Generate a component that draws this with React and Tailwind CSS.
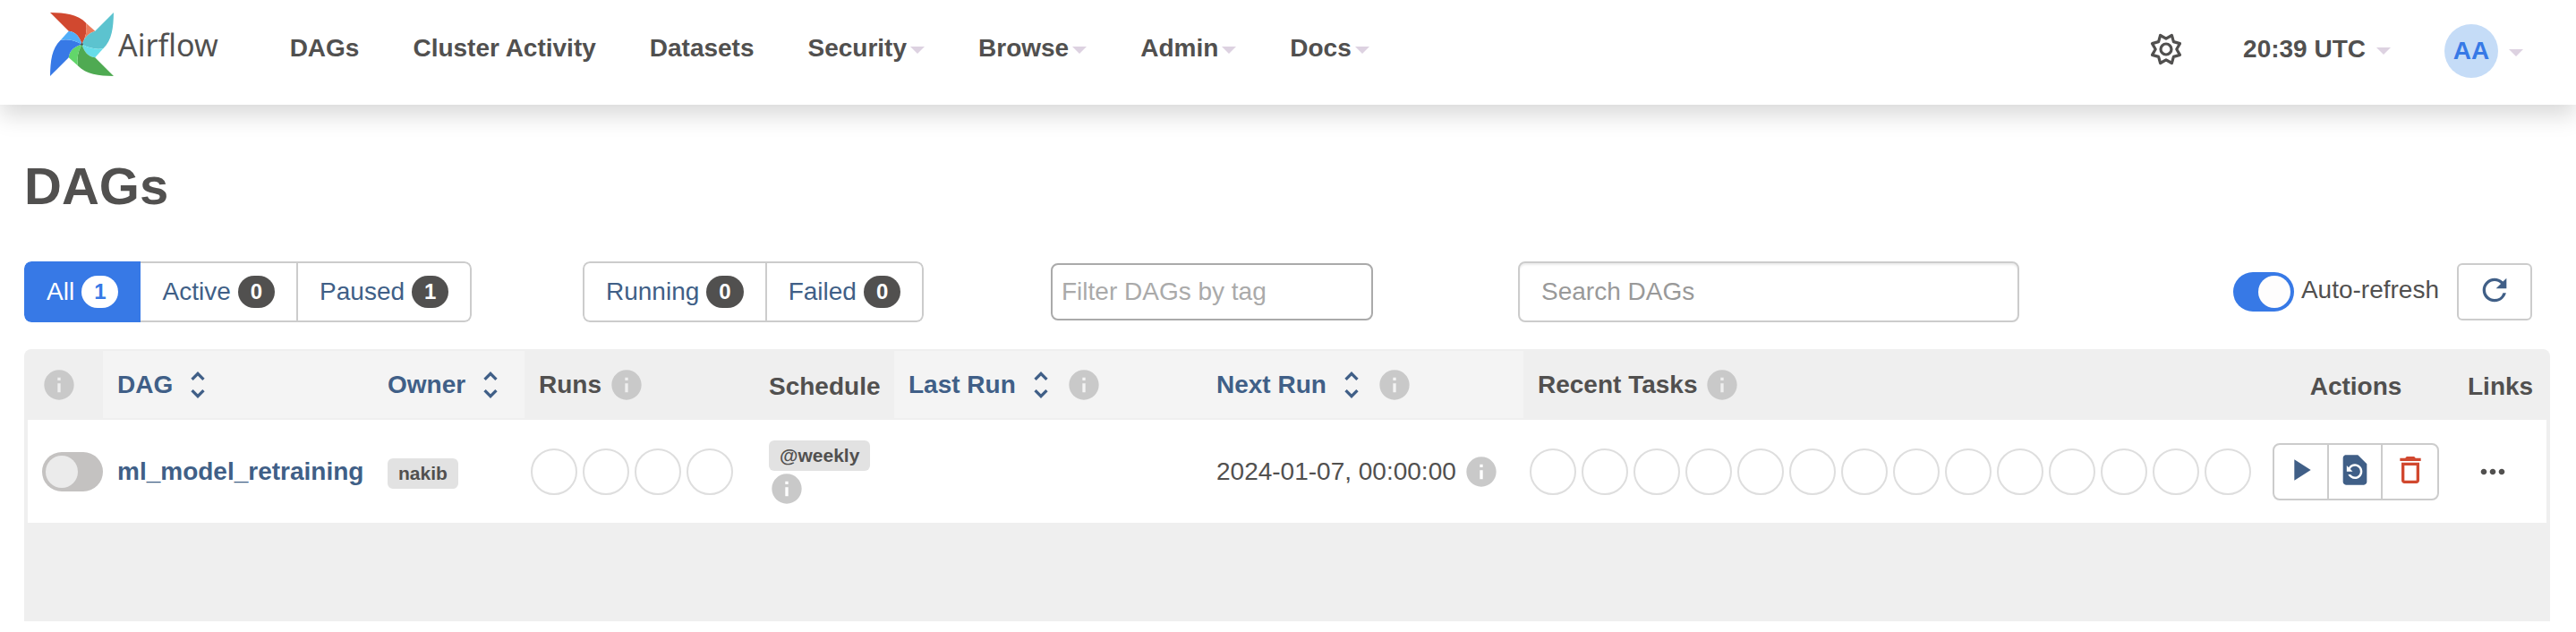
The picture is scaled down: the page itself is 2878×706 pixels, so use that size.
import React from "react";
import {
  MdInfo,
  MdUnfoldMore,
  MdPlayArrow,
  MdRestorePage,
  MdDeleteOutline,
  MdMoreHoriz,
  MdRefresh,
} from "react-icons/md";

const navItems = [
  { label: "DAGs" },
  { label: "Cluster Activity" },
  { label: "Datasets" },
  { label: "Security", menu: true },
  { label: "Browse", menu: true },
  { label: "Admin", menu: true },
  { label: "Docs", menu: true },
];

const innerEdge = "C-6 -22 -20 -42 -44 -44";
const foldEdge = "C42 -20 22 -6 0 0";

const blades = [
  { angle: 0, dark: "#d1482f", light: "#ec7c5c", inner: innerEdge, fold: "C24 -38 8 -22 0 0" },
  { angle: 90, dark: "#5cc3cf", light: "#66dde9", inner: "C-22 -8 -38 -24 -44 -44", fold: foldEdge },
  { angle: 180, dark: "#4faa52", light: "#62d66a", inner: innerEdge, fold: foldEdge },
  { angle: 270, dark: "#3779e6", light: "#51aef8", inner: innerEdge, fold: foldEdge },
];

function Pinwheel() {
  return (
    <svg viewBox="-106 -106 212 212" className="size-[71px]" aria-hidden="true">
      {blades.map((b) => (
        <g key={b.angle} transform={`rotate(${b.angle})`}>
          <path d={`M-106 -106C-56 -105 -14 -101 14 -71Q20 -36 0 0${b.inner}Z`} fill={b.dark} />
          <path d={`M14 -71L44 -44${b.fold}Q20 -36 14 -71Z`} fill={b.light} />
        </g>
      ))}
      <circle r="4" fill="#51504f" />
    </svg>
  );
}

function Gear() {
  return (
    <svg viewBox="-18 -18 36 36" className="size-9" fill="none" stroke="#51504f" strokeWidth="3.2" strokeLinejoin="round" aria-hidden="true">
      <path d="M-6.4 -15.5L0 -11.8L6.4 -15.5L8.4 -8.4L15.5 -6.4L11.8 0L15.5 6.4L8.4 8.4L6.4 15.5L0 11.8L-6.4 15.5L-8.4 8.4L-15.5 6.4L-11.8 0L-15.5 -6.4L-8.4 -8.4Z" />
      <circle r="6" />
    </svg>
  );
}

function Caret() {
  return (
    <svg viewBox="0 0 16 8" className="mt-1 h-2 w-4 shrink-0" aria-hidden="true">
      <path d="M0 0H16L8 8Z" fill="#ddd2e1" />
    </svg>
  );
}

function Info() {
  return <MdInfo className="size-10 shrink-0 text-[#c9c9c9]" role="img" aria-label="Info" />;
}

function FilterGroup({ items }) {
  return (
    <div className="inline-flex overflow-hidden rounded-lg">
      {items.map((it, i) => (
        <a
          key={it.label}
          href="#"
          className={
            "flex h-[68px] items-center gap-2 border-2 " +
            (it.active
              ? "rounded-l-lg border-[#3779e6] bg-[#3779e6] px-[23px] text-white"
              : "border-[#ccc] px-6 text-[#405f87]") +
            (i > 0 ? " border-l-0" : " rounded-l-lg") +
            (i === items.length - 1 ? " rounded-r-lg" : "")
          }
        >
          {it.label}
          <span
            className={
              "rounded-[20px] px-[14px] text-2xl leading-9 font-bold " +
              (it.active ? "bg-white text-[#3779e6]" : "bg-[#51504f] text-white")
            }
          >
            {it.count}
          </span>
        </a>
      ))}
    </div>
  );
}

function Toggle({ label, on, hidden }) {
  return (
    <label className="flex items-center gap-2">
      <input type="checkbox" role="switch" defaultChecked={on} aria-label={label} className="peer sr-only" />
      <span className="flex h-11 w-[68px] shrink-0 rounded-full bg-[#c4c2c1] p-1 peer-checked:justify-end peer-checked:bg-[#3779e6]">
        <span className={"size-9 rounded-full " + (on ? "bg-[#fefdfd]" : "bg-[#ebebeb]")} />
      </span>
      {!hidden && <span className="pb-1">{label}</span>}
    </label>
  );
}

function SortHead({ label, info, className }) {
  return (
    <th scope="col" className={"bg-[#f4f4f4] px-4 text-left " + className}>
      <div className="flex items-center gap-2">
        <a href="#" className="flex items-center gap-2 text-[#405f87]">
          {label}
          <MdUnfoldMore className="size-10" aria-hidden="true" />
        </a>
        {info && <Info />}
      </div>
    </th>
  );
}

function Circles({ count }) {
  return (
    <div className="flex gap-[6px]">
      {Array.from({ length: count }, (_, i) => (
        <svg key={i} viewBox="0 0 52 52" className="size-[52px] shrink-0" aria-hidden="true">
          <circle cx="26" cy="26" r="25" fill="none" stroke="#dedede" strokeWidth="2" />
        </svg>
      ))}
    </div>
  );
}

const tag = "inline-block rounded-md bg-[#e2e2e2] px-3 text-[21px] leading-[34px] font-bold";

export default function App() {
  return (
    <div className="bg-white font-['Liberation_Sans',Arial,sans-serif] text-[28px] leading-10 text-[#51504f]">
      <header className="relative flex h-[117px] items-start justify-between bg-white pr-[59px] pl-14 shadow-[0_12px_24px_rgba(0,0,0,0.15)]">
        <div className="flex items-start">
          <a href="#" className="flex items-center gap-[5px] pt-[14px] font-['Noto_Sans',sans-serif] text-[34px]">
            <Pinwheel />
            <span>Airflow</span>
          </a>
          <nav className="ml-20 flex gap-[60px] pt-[34px] font-bold">
            {navItems.map((n) => (
              <a key={n.label} href="#" className="flex items-center gap-1">
                {n.label}
                {n.menu && <Caret />}
              </a>
            ))}
          </nav>
        </div>
        <div className="flex items-center pt-[27px] font-bold">
          <button type="button" aria-label="Settings" className="mr-[68px] -mt-1">
            <Gear />
          </button>
          <button type="button" className="-mt-1 mr-[60px] flex items-center gap-3">
            20:39 UTC
            <Caret />
          </button>
          <button type="button" className="flex items-center gap-3">
            <span className="size-[60px] rounded-full bg-[#c5dcf7] text-center leading-[60px] text-[#3779e6]">AA</span>
            <Caret />
          </button>
        </div>
      </header>

      <main className="pt-14 pr-[29px] pb-3 pl-[27px]">
        <h1 className="text-[58px] leading-[70px] font-bold">DAGs</h1>

        <div className="mt-[49px] grid grid-cols-[624fr_523fr_522fr_1153fr] items-center">
          <div className="flex">
            <FilterGroup
              items={[
                { label: "All", count: 1, active: true },
                { label: "Active", count: 0 },
                { label: "Paused", count: 1 },
              ]}
            />
          </div>
          <div className="flex">
            <FilterGroup
              items={[
                { label: "Running", count: 0 },
                { label: "Failed", count: 0 },
              ]}
            />
          </div>
          <input
            type="text"
            aria-label="Filter DAGs by tag"
            placeholder="Filter DAGs by tag"
            className="h-16 w-[360px] rounded-lg border-2 border-[#aaa] px-[10px] placeholder:text-[#aaa]"
          />
          <div className="flex items-center justify-between pr-5">
            <input
              type="search"
              aria-label="Search DAGs"
              placeholder="Search DAGs"
              className="h-[68px] w-[560px] rounded-lg border-2 border-[#ccc] px-6 shadow-[inset_0_2px_2px_rgba(0,0,0,0.075)] placeholder:text-[#999]"
            />
            <div className="flex items-center gap-5">
              <Toggle label="Auto-refresh" on />
              <button
                type="button"
                aria-label="Refresh"
                className="flex h-16 w-[84px] items-center justify-center rounded-md border-2 border-[#ccc] pb-1 text-[#405f87]"
              >
                <MdRefresh className="size-10" />
              </button>
            </div>
          </div>
        </div>

        <div className="mt-[30px] rounded-t-lg bg-[#efefef] px-1 pt-[2px] pb-[110px]">
          <table className="w-full table-fixed border-collapse">
            <thead>
              <tr className="h-[76px]">
                <th scope="col" className="w-[84px] pl-[15px]">
                  <Info />
                </th>
                <SortHead label="DAG" className="w-[302px]" />
                <SortHead label="Owner" className="w-[169px]" />
                <th scope="col" className="w-[257px] px-4">
                  <div className="flex items-center gap-2">
                    Runs
                    <Info />
                  </div>
                </th>
                <th scope="col" className="w-[156px] px-4 pt-1 text-left">
                  Schedule
                </th>
                <SortHead label="Last Run" info className="w-[344px]" />
                <SortHead label="Next Run" info className="w-[359px]" />
                <th scope="col" className="px-4">
                  <div className="flex items-center gap-2">
                    Recent Tasks
                    <Info />
                  </div>
                </th>
                <th scope="col" className="w-[218px] px-4 pt-1 text-center">
                  Actions
                </th>
                <th scope="col" className="w-[104px] px-4 pt-1 text-center">
                  Links
                </th>
              </tr>
            </thead>
            <tbody>
              <tr className="h-[116px] border-t-2 border-[#efefef] bg-white">
                <td className="pl-4">
                  <Toggle label="Pause or unpause ml_model_retraining" hidden />
                </td>
                <td className="px-4">
                  <a href="#" className="font-bold text-[#405f87]">
                    ml_model_retraining
                  </a>
                </td>
                <td className="px-4">
                  <a href="#" className={tag}>
                    nakib
                  </a>
                </td>
                <td className="pl-[7px]">
                  <Circles count={4} />
                </td>
                <td className="px-4 pt-1">
                  <div className="flex flex-col items-start">
                    <a href="#" className={tag}>
                      @weekly
                    </a>
                    <Info />
                  </div>
                </td>
                <td className="px-4" />
                <td className="px-4">
                  <div className="flex items-center gap-2 whitespace-nowrap">
                    <time dateTime="2024-01-07T00:00:00Z">2024-01-07, 00:00:00</time>
                    <Info />
                  </div>
                </td>
                <td className="pl-[7px]">
                  <Circles count={14} />
                </td>
                <td className="px-4">
                  <div className="grid h-16 grid-cols-3 divide-x-2 divide-[#ccc] rounded-lg border-2 border-[#ccc] text-[#405f87]">
                    <button type="button" aria-label="Trigger DAG" className="flex items-center justify-center pb-1">
                      <MdPlayArrow className="size-10" />
                    </button>
                    <button type="button" aria-label="Reparse DAG" className="flex items-center justify-center pb-1">
                      <MdRestorePage className="size-10" />
                    </button>
                    <button type="button" aria-label="Delete DAG" className="flex items-center justify-center pb-1 text-[#d1482f]">
                      <MdDeleteOutline className="size-10" />
                    </button>
                  </div>
                </td>
                <td className="pl-6">
                  <button type="button" aria-label="Links" className="block">
                    <MdMoreHoriz className="size-10" />
                  </button>
                </td>
              </tr>
            </tbody>
          </table>
        </div>
      </main>
    </div>
  );
}
